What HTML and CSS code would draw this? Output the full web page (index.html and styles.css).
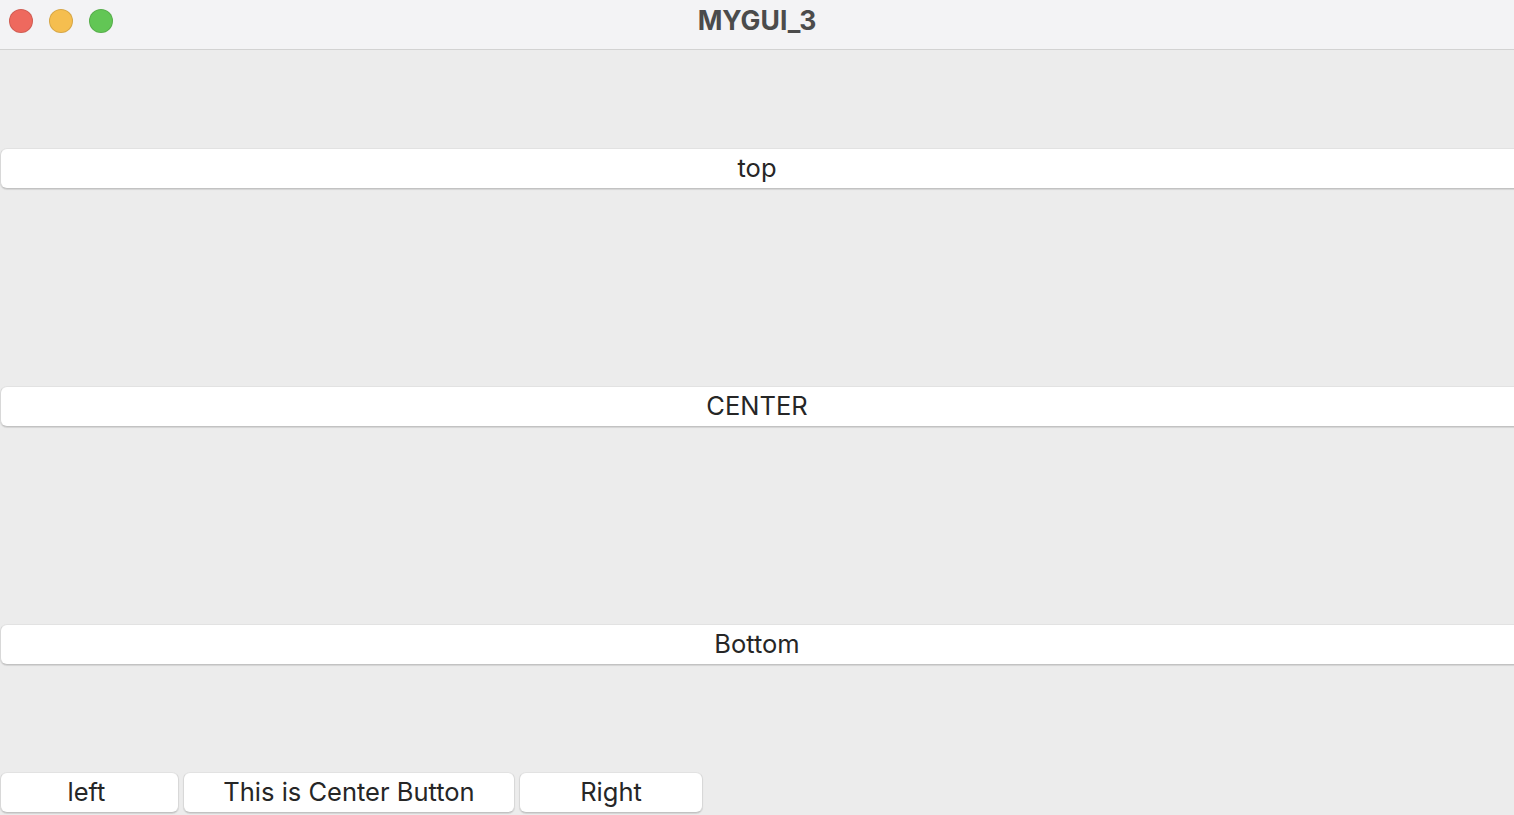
FILE: index.html
```html
<!DOCTYPE html>
<html>
<head>
<meta charset="utf-8">
<link rel="stylesheet" href="styles.css">
</head>
<body>
<div class="window">
  <div class="titlebar">
    <div class="lights">
      <span class="light red"></span>
      <span class="light yellow"></span>
      <span class="light green"></span>
    </div>
    <div class="title">MYGUI_3</div>
  </div>
  <div class="content">
    <div class="btn wide b-top">top</div>
    <div class="btn wide b-center">CENTER</div>
    <div class="btn wide b-bottom">Bottom</div>
    <div class="row">
      <div class="btn b-left">left</div>
      <div class="btn b-mid">This is Center Button</div>
      <div class="btn b-right">Right</div>
    </div>
  </div>
</div>
</body>
</html>
```
FILE: styles.css
```css
html, body {
  margin: 0;
  padding: 0;
  width: 1514px;
  height: 815px;
  overflow: hidden;
  background: #ececec;
  font-family: Inter, "Liberation Sans", Arial, sans-serif;
}
.window {
  width: 1514px;
  height: 815px;
  display: flex;
  flex-direction: column;
}
.titlebar {
  height: 49px;
  border-bottom: 1px solid #d2d2d2;
  background: #f3f3f5;
  display: flex;
  align-items: center;
  justify-content: center;
  position: relative;
}
.lights {
  position: absolute;
  left: 9px;
  top: 9px;
  display: flex;
  gap: 16px;
}
.light {
  width: 22px;
  height: 22px;
  border-radius: 50%;
  border: 1px solid rgba(0,0,0,0.12);
}
.red { background: #ee695e; }
.yellow { background: #f5be4f; }
.green { background: #62c655; }
.title {
  font-size: 26.5px;
  font-weight: bold;
  color: #4b4b4b;
  margin-top: -10px;
}
.content {
  display: flex;
  flex-direction: column;
  padding-top: 98px;
}
.btn {
  box-sizing: border-box;
  height: 41px;
  background: #fff;
  border: 1px solid #d8d8d8;
  border-top-color: #e2e2e2;
  border-bottom-color: #c2c2c2;
  border-radius: 7px;
  box-shadow: 0 1px 1px rgba(0,0,0,0.10);
  display: flex;
  align-items: center;
  justify-content: center;
  font-size: 25.5px;
  color: #262626;
  padding-bottom: 2px;
}
.wide {
  width: 1530px;
  padding-right: 16px;
}
.b-center { margin-top: 197px; }
.b-bottom { margin-top: 197px; }
.row {
  margin-top: 107px;
  display: flex;
  gap: 4px;
}
.b-left { width: 179px; padding-right: 6px; }
.b-mid { width: 332px; }
.b-right { width: 184px; }
```
